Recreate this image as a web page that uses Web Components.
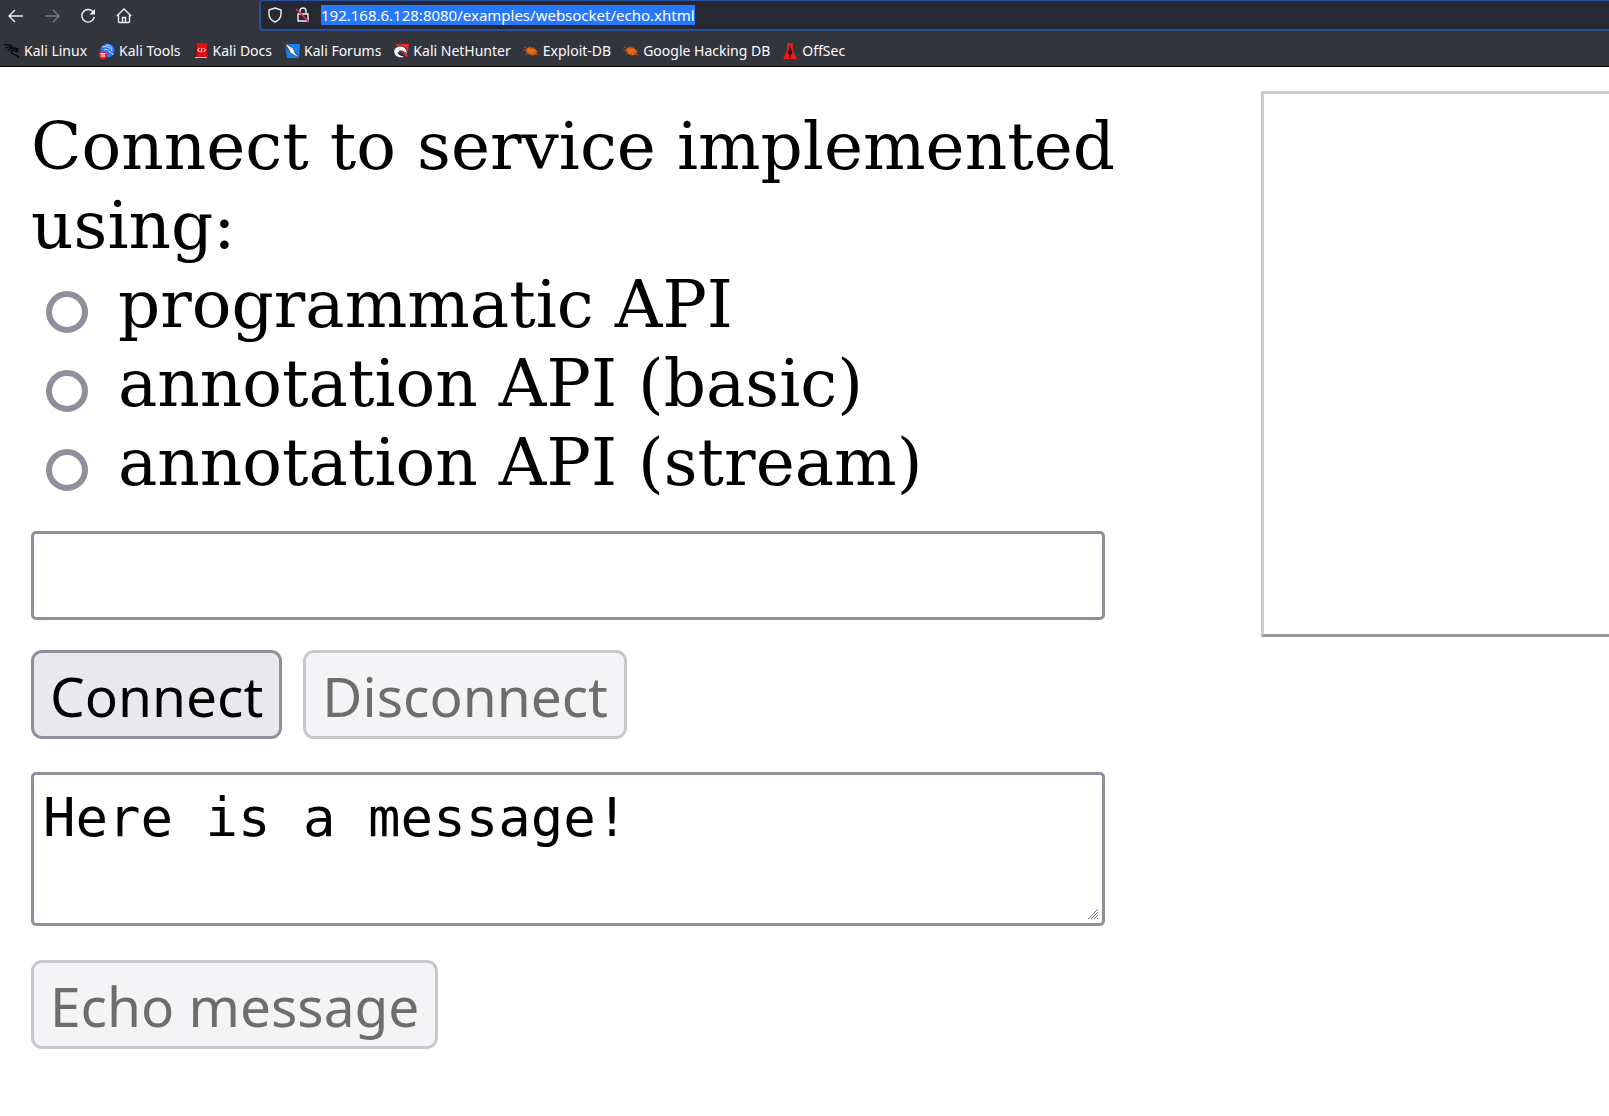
<!DOCTYPE html>
<html lang="en">
<head>
<meta charset="utf-8">
<title>WebSocket echo</title>
<style>
body { margin: 0; background: #fff; color: #000; font-family: "DejaVu Serif", serif; }
</style>
</head>
<body>
<browser-toolbar></browser-toolbar>
<bookmark-bar>
  <bookmark-link icon="dragon">Kali Linux</bookmark-link>
  <bookmark-link icon="tools">Kali Tools</bookmark-link>
  <bookmark-link icon="docs">Kali Docs</bookmark-link>
  <bookmark-link icon="forums">Kali Forums</bookmark-link>
  <bookmark-link icon="nethunter">Kali NetHunter</bookmark-link>
  <bookmark-link icon="bug">Exploit-DB</bookmark-link>
  <bookmark-link icon="bug">Google Hacking DB</bookmark-link>
  <bookmark-link icon="offsec">OffSec</bookmark-link>
</bookmark-bar>
<echo-page>
  <echo-client></echo-client>
  <echo-console slot="console"></echo-console>
</echo-page>
<script>
function define(name, html, setup) {
  const template = document.createElement('template');
  template.innerHTML = html;
  customElements.define(name, class extends HTMLElement {
    constructor() {
      super();
      this.attachShadow({ mode: 'open' }).append(template.content.cloneNode(true));
    }
    connectedCallback() { if (setup) setup(this, this.shadowRoot); }
  });
}

const icons = {
  dragon: '<path d="M0 2c3-1 6 0 9 2M1 5c3-1 6-1 8 0 3 1 4 2 5 4M4 8c1-3 5-3 7-2 3 0 3 2 2 3-3-2-6-2-6 0 0 3 6 1 8 6" fill="none" stroke="#08090b" stroke-width="1.3"/><path d="M9 4l5 1 1 3-3-2z" fill="#08090b"/>',
  tools: '<circle cx="8.500" cy="7.500" r="7" fill="#2877f5"/><path d="M3 4c4-1 8 0 10 4M5 7c3-2 6 1 5 2 2 0 3 1 4 3M7 2c3 0 5 1 6 4" stroke="#cfe0ff" fill="none"/><circle cx="4" cy="12" r="4" fill="#e9252d"/><path d="M1.500 10.500h5M3 10.500v3.500M5 10.500v3.500" stroke="#fff" fill="none"/>',
  docs: '<path d="M2 1l2-1h10v14H2z" fill="#dd1116"/><path d="M2 1l2-1v14H2z" fill="#850b0e"/><path d="M2 14h12v1H2z" fill="#d9cccc"/><path d="M6.500 5L4.500 7l2 2M10.500 5l2 2-2 2M9 5L8 9.500" stroke="#fff" fill="none"/>',
  forums: '<path d="M1 1h15l-1 14H3z" fill="#1683f5"/><path d="M0 0l9 5 2 5 5 5-6-3-5-3z" fill="#fff" stroke="#14253a" stroke-width=".6"/><path d="M1 1l5 8" fill="none" stroke="#14253a"/>',
  nethunter: '<path d="M2 1h14l-2 14z" fill="#ee2733"/><path d="M1 10C-1 4 9 0 13 6l2 5-4-2C7 6 3 10 7 12l6 2c-6 2-11 0-12-4z" fill="#fff" stroke="#17191e" stroke-width=".8"/>',
  bug: '<ellipse cx="8.500" cy="8" rx="5.500" ry="3.700" transform="rotate(18 8 8)" fill="#f26711"/><path d="M1 4l4 2M0 7l5 1M2 12l4-3M6 3l2 3M11 4L9 6M15 8l-4 1M15 12l-5-2M9 13l-1-3" stroke="#a94e19" fill="none"/>',
  offsec: '<path d="M5 0h6v7l4 9H1l4-9z" fill="#e41b20"/><path d="M8 3v12M8 5l-2 5 2 2 2-2z" stroke="#3b080a" fill="#3b080a"/>'
};

define('browser-toolbar', `
<style>
:host { display: flex; align-items: flex-start; height: 34px; background: #33353d; font: 15px/20px "Noto Sans", sans-serif; color: #fbfbfe; }
nav { display: flex; gap: 20px; width: 259px; box-sizing: border-box; padding: 8px 0 0 8px; }
button { border: 0; padding: 0; background: none; color: #eeeef2; width: 16px; height: 16px; display: block; }
button:disabled { color: #787a82; }
svg { display: block; width: 16px; height: 16px; fill: none; stroke: currentColor; stroke-width: 1.4; flex: none; }
.address { flex: 1; display: flex; align-items: center; gap: 12px; height: 31px; box-sizing: border-box; padding-left: 6px; background: #262832; border: 2px solid #2850a0; border-top-width: 1px; border-right: 0; border-radius: 4px 0 0 4px; color: #eeeef2; }
input { field-sizing: content; border: 0; padding: 0; margin-left: -2px; height: 20px; background: #2878ff; color: #fff; font: inherit; outline: 0; }
</style>
<nav aria-label="Navigation">
<button aria-label="Back"><svg viewBox="0 0 16 16"><path d="M15 8H1.500M7 2L1 8l6 6"/></svg></button>
<button aria-label="Forward" disabled><svg viewBox="0 0 16 16"><path d="M1 8h13.500M9 2l6 6-6 6"/></svg></button>
<button aria-label="Reload"><svg viewBox="0 0 16 16"><path d="M13.500 4.500A6.300 6.300 0 1 0 14.300 9"/><path d="M15 1v5.500H9.500z" fill="currentColor" stroke="none"/></svg></button>
<button aria-label="Home"><svg viewBox="0 0 16 16"><path d="M.8 8L8 1l7.200 7M2.500 7v6.500a1 1 0 0 0 1 1h9a1 1 0 0 0 1-1V7M6.500 14V9.500h3V14"/></svg></button>
</nav>
<div class="address">
<svg viewBox="0 0 16 16"><path d="M8 1L2 3v4c0 3.500 2.500 6.500 6 8 3.500-1.500 6-4.500 6-8V3z" stroke-linejoin="round"/></svg>
<svg viewBox="0 0 16 16"><path d="M5 7V4a3 3 0 0 1 6 0v3M3 7h10v7H3z" stroke-linejoin="round"/><path d="M1 2l13 13" stroke="#e22850" stroke-width="1.600"/></svg>
<input aria-label="Address" value="192.168.6.128:8080/examples/websocket/echo.xhtml">
</div>`);

define('bookmark-bar', `
<style>
:host { display: flex; align-items: center; gap: 12px; height: 32px; box-sizing: content-box; padding-left: 4px; background: #33353d; border-bottom: 1px solid #08080c; font: 14px/20px "Noto Sans", sans-serif; color: #fbfbfe; white-space: nowrap; }
</style><slot></slot>`);

define('bookmark-link', `
<style>
:host { display: block; padding-top: 2px; }
a { display: flex; align-items: center; gap: 4px; color: inherit; text-decoration: none; }
svg { width: 16px; height: 16px; flex: none; }
</style><a href="#"><svg viewBox="0 0 16 16" aria-hidden="true"></svg><span><slot></slot></span></a>`,
(host, root) => { root.querySelector('svg').innerHTML = icons[host.getAttribute('icon')]; });

define('echo-page', `
<style>
:host { display: grid; grid-template-columns: 1230fr 348fr; align-items: start; padding: 24px 0 0 31px; }
</style><slot></slot><slot name="console"></slot>`);

define('api-option', `
<style>
:host { display: block; }
label { display: flex; align-items: flex-start; gap: 30px; padding-left: 15px; }
input { appearance: none; box-sizing: border-box; flex: none; width: 42px; height: 42px; margin: 26px 0 0; border: 6px solid #8f8f9d; border-radius: 50%; background: #fff; }
input:checked { background: #0060df; }
</style><label><input type="radio" name="api"><span><slot></slot></span></label>`);

define('echo-button', `
<style>
:host { display: block; }
button { display: block; box-sizing: border-box; height: 89px; padding: 2px 16px 0; border: 3px solid #8f8f9d; border-radius: 11px; background: #e9e9ed; color: #000; font: 55px/78px "Noto Sans", sans-serif; white-space: nowrap; }
button:disabled { border-color: #c7c7ce; background: #f4f4f6; color: #6d6d6d; }
</style><button><slot></slot></button>`,
(host, root) => { root.querySelector('button').disabled = host.hasAttribute('disabled'); });

define('echo-client', `
<style>
:host { display: block; padding-top: 16px; font: 66px/79px "DejaVu Serif", serif; }
p { margin: 0; }
.target, textarea { display: block; box-sizing: border-box; width: calc(100% - 156px); border: 3px solid #8f8f9d; border-radius: 5px; background: #fff; color: #000; outline: 0; }
.target { height: 89px; margin-top: 29px; padding: 4px 9px; font: 55px/62px "Noto Sans", sans-serif; }
.actions { display: flex; gap: 21px; margin: 30px 0 33px; }
textarea { height: 154px; margin-bottom: 34px; padding: 12px 9px 9px; font: 54px/62px "DejaVu Sans Mono", monospace; resize: both; overflow: auto; }
textarea::-webkit-resizer { background: url("data:image/svg+xml,%3Csvg xmlns='http://www.w3.org/2000/svg' width='10' height='10'%3E%3Cpath d='M0 10L10 0M3 10l7-7M6 10l4-4M9 10l1-1' stroke='%23777'/%3E%3C/svg%3E") 1px 1px no-repeat; }
</style>
<p id="title">Connect to service implemented using:</p>
<div role="radiogroup" aria-labelledby="title">
<api-option>programmatic API</api-option>
<api-option>annotation API (basic)</api-option>
<api-option>annotation API (stream)</api-option>
</div>
<input class="target" type="text" aria-label="Service address">
<div class="actions"><echo-button>Connect</echo-button><echo-button disabled>Disconnect</echo-button></div>
<textarea aria-label="Message">Here is a message!</textarea>
<echo-button disabled>Echo message</echo-button>`);

define('echo-console', `
<style>
:host { display: block; box-sizing: border-box; height: 546px; border: 3px solid #ccc; border-bottom-color: #999; border-right: 0; background: #fff; }
</style>`);
</script>
</body>
</html>
